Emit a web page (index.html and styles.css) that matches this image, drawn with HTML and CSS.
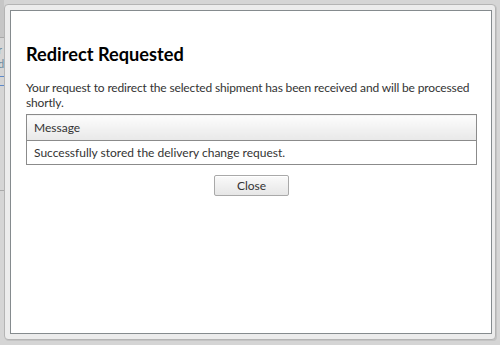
FILE: index.html
```html
<!DOCTYPE html>
<html lang="en">
<head>
  <meta charset="UTF-8" />
  <title>Redirect Requested</title>
  <link rel="stylesheet" href="styles.css">
</head>
<body>

  <!-- page behind the modal -->
  <div class="backdrop">
    <div class="backdrop-bar"></div>
    <div class="backdrop-text">r<br>d</div>
    <div class="backdrop-box"></div>
    <div class="backdrop-line"></div>
  </div>

  <!-- Modal frame -->
  <div class="frame">
    <div class="dialog">
      <h1>Redirect Requested</h1>
      <p class="intro">Your request to redirect the selected shipment has been received and will be processed shortly.</p>

      <table class="grid">
        <thead>
          <tr><th>Message</th></tr>
        </thead>
        <tbody>
          <tr><td>Successfully stored the delivery change request.</td></tr>
        </tbody>
      </table>

      <div class="actions">
        <button class="btn">Close</button>
      </div>
    </div>
  </div>

</body>
</html>
```

FILE: styles.css
```css
html, body {
  margin: 0;
  padding: 0;
  height: 100%;
}

body {
  position: relative;
  background: #d5d5d5;
  font-family: 'Lato', 'Open Sans', sans-serif;
  color: #333;
  padding: 4px 4px 5px 4px;
  box-sizing: border-box;
  display: flex;
}

.backdrop {
  position: absolute;
  top: 0;
  left: 0;
  width: 4px;
  height: 100%;
  overflow: hidden;
}

.backdrop-bar {
  height: 37px;
  background: #c6c6c6;
  border-bottom: 1px solid #a8a8a8;
}

.backdrop-text {
  font-size: 11px;
  line-height: 14px;
  color: #6b8aa0;
  margin: 5px 0 0 -2px;
}

.backdrop-box {
  width: 6px;
  height: 8px;
  margin: 5px 0 0 -3px;
  border: 1px solid #5d89c9;
}

.backdrop-line {
  margin-top: 104px;
  border-top: 1px solid #aaa;
}

.frame {
  flex: 1;
  display: flex;
  background: #ececec;
  border: 1px solid #b4b4b4;
  border-radius: 4px;
  padding: 5px 3px 5px 5px;
  box-shadow: 1px 1px 0 #c4c4c4;
}

.dialog {
  flex: 1;
  background: #fff;
  border: 1px solid #858b8e;
  padding: 0 14px 0 15px;
}

h1 {
  margin: 31px 0 0 0;
  font-size: 18.2px;
  line-height: 24px;
  font-weight: bold;
  color: #000;
}

.intro {
  margin: 14px 0 0 0;
  font-size: 12px;
  line-height: 15px;
  letter-spacing: -0.15px;
  color: #333;
}

.grid {
  width: 100%;
  margin-top: 4px;
  border-collapse: collapse;
  border: 1px solid #8b8b8b;
  font-size: 12px;
}

.grid th {
  text-align: left;
  font-weight: normal;
  color: #333;
  height: 25px;
  padding: 0 0 0 7px;
  background: linear-gradient(to bottom, #fdfdfd, #e8e8e8);
  border-bottom: 1px solid #8b8b8b;
}

.grid td {
  height: 23px;
  padding: 0 0 0 7px;
  color: #333;
}

.actions {
  display: flex;
  justify-content: center;
  margin-top: 10px;
}

.btn {
  width: 75px;
  height: 21px;
  font-family: inherit;
  font-size: 12px;
  color: #333;
  border: 1px solid #a9a9a9;
  border-radius: 2px;
  background: linear-gradient(to bottom, #fafafa, #e6e6e6);
  box-shadow: inset 0 1px 0 #fff;
  padding: 0;
  cursor: pointer;
}
```
